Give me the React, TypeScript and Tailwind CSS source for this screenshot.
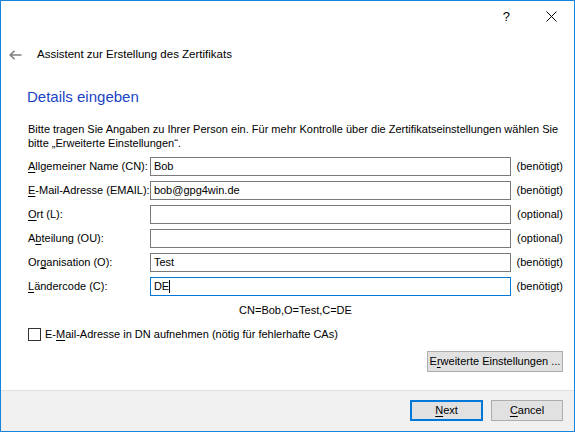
import React from 'react';

const FONT = { fontFamily: '"Liberation Sans", Arial, sans-serif' };

interface Field {
  pre: string;
  key: string;
  post: string;
  value: string;
  hint: string;
  focused?: boolean;
}

const FIELDS: Field[] = [
  { pre: '', key: 'A', post: 'llgemeiner Name (CN):', value: 'Bob', hint: '(benötigt)' },
  { pre: '', key: 'E', post: '-Mail-Adresse (EMAIL):', value: 'bob@gpg4win.de', hint: '(benötigt)' },
  { pre: '', key: 'O', post: 'rt (L):', value: '', hint: '(optional)' },
  { pre: 'A', key: 'b', post: 'teilung (OU):', value: '', hint: '(optional)' },
  { pre: 'Or', key: 'g', post: 'anisation (O):', value: 'Test', hint: '(benötigt)' },
  { pre: '', key: 'L', post: 'ändercode (C):', value: 'DE', hint: '(benötigt)', focused: true },
];

function Mnemonic({ pre, k, post }: { pre: string; k: string; post: string }) {
  return (
    <>
      {pre}
      <span className="underline underline-offset-2">{k}</span>
      {post}
    </>
  );
}

export default function App() {
  return (
    <div
      className="w-[575px] h-[432px] box-border border border-[#1883d7] bg-white flex flex-col text-[11px] text-black overflow-hidden"
      style={FONT}
    >
      {/* title bar */}
      <div className="h-[30px] flex items-center justify-end shrink-0">
        <span className="text-[13px] mr-[36px] leading-none">?</span>
        <svg width="11" height="11" viewBox="0 0 11 11" className="mr-[17px]">
          <path d="M0.5 0.5 L10.5 10.5 M10.5 0.5 L0.5 10.5" stroke="#000" strokeWidth="1" fill="none" />
        </svg>
      </div>

      {/* wizard header */}
      <div className="h-[24px] mt-[12px] flex items-center shrink-0">
        <svg width="13" height="10" viewBox="0 0 13 10" className="ml-[8px]">
          <path d="M1 5 H12.5 M5.5 0.8 L1.2 5 L5.5 9.2" stroke="#7f7f7f" strokeWidth="1.6" fill="none" />
        </svg>
        <span className="ml-[15px] text-[11.5px]">Assistent zur Erstellung des Zertifikats</span>
      </div>

      <div className="flex-1 flex flex-col pl-[27px] pr-[11px]">
        <h1 className="mt-[20px] -ml-[1px] text-[15px] leading-[20px] text-[#1a44c4]">Details eingeben</h1>

        <p className="mt-[15px] leading-[14px] whitespace-nowrap">
          Bitte tragen Sie Angaben zu Ihrer Person ein. Für mehr Kontrolle über die Zertifikatseinstellungen wählen Sie
          <br />
          bitte „Erweiterte Einstellungen“.
        </p>

        <div className="mt-[7px] flex flex-col gap-[5px]">
          {FIELDS.map(f => (
            <div key={f.post} className="flex items-center h-[19px]">
              <label className="w-[122px] whitespace-nowrap">
                <Mnemonic pre={f.pre} k={f.key} post={f.post} />
              </label>
              <div
                className={
                  f.focused
                    ? 'w-[361px] h-[19px] box-border border border-[#0078d7] flex items-center px-[3px]'
                    : 'w-[361px] h-[19px] box-border border border-[#7a7a7a] flex items-center px-[3px]'
                }
              >
                <span>{f.value}</span>
                {f.focused && <span className="w-px h-[13px] bg-black" />}
              </div>
              <span className="ml-[6px] whitespace-nowrap">{f.hint}</span>
            </div>
          ))}
        </div>

        <div className="mt-[7px] leading-[14px] text-center">CN=Bob,O=Test,C=DE</div>

        <div className="mt-[11px] flex items-center h-[13px]">
          <span className="w-[13px] h-[13px] box-border border border-[#333333] bg-white" />
          <span className="ml-[4px]">
            E-<span className="underline underline-offset-2">M</span>ail-Adresse in DN aufnehmen (nötig für fehlerhafte CAs)
          </span>
        </div>

        <div className="mt-[10px] flex justify-end">
          <button className="w-[136px] h-[21px] box-border border border-[#adadad] bg-[#e1e1e1] whitespace-nowrap">
            E<span className="underline underline-offset-2">r</span>weiterte Einstellungen ...
          </button>
        </div>
      </div>

      {/* footer */}
      <div className="h-[41px] shrink-0 border-t border-[#dfdfdf] bg-[#f0f0f0] flex items-start justify-end gap-[8px] pr-[11px] pt-[9px]">
        <button className="w-[73px] h-[21px] box-border border-2 border-[#0078d7] bg-[#e1e1e1]">
          <span className="underline underline-offset-2">N</span>ext
        </button>
        <button className="w-[72px] h-[21px] box-border border border-[#adadad] bg-[#e1e1e1]">
          <span className="underline underline-offset-2">C</span>ancel
        </button>
      </div>
    </div>
  );
}
